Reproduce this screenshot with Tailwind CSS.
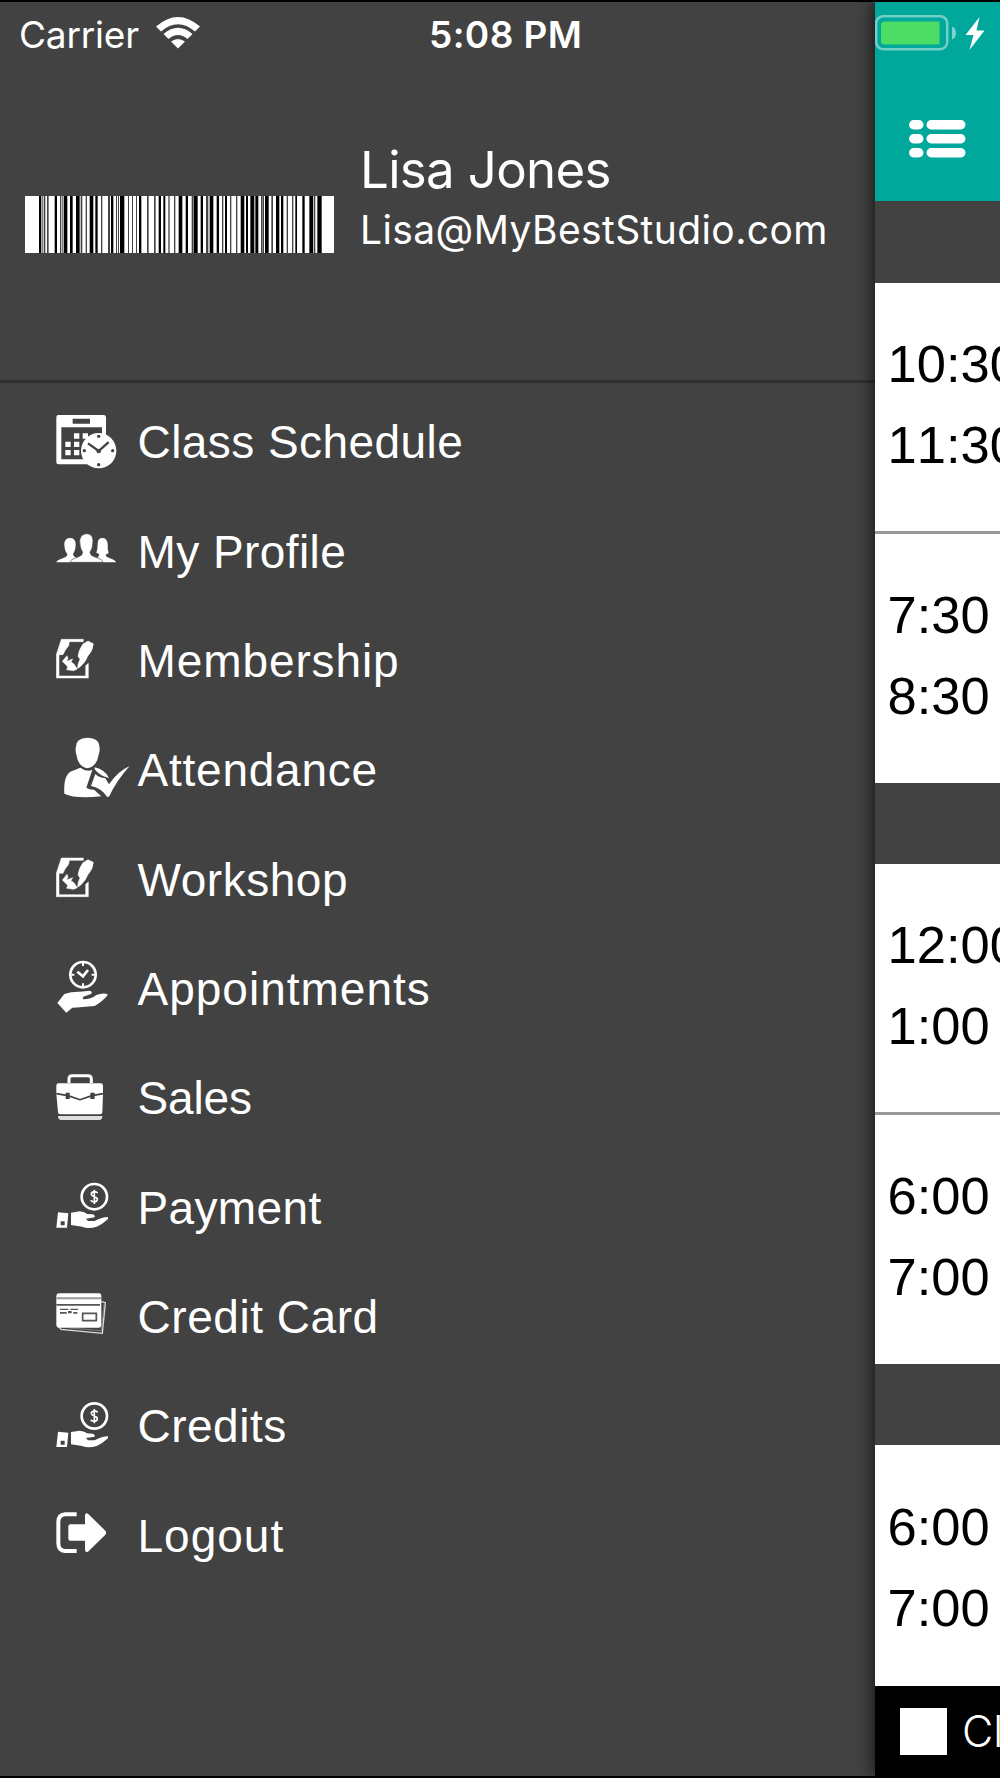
<!DOCTYPE html>
<html lang="en">
<head>
<meta charset="utf-8">
<title>Menu</title>
<script src="https://cdn.jsdelivr.net/npm/@tailwindcss/browser@4"></script>
</head>
<body class="bg-black">
<div class="relative flex h-[1778px] w-[1000px] overflow-hidden bg-[#424242] border-y-2 border-black font-['Inter',sans-serif] text-white">
  <!-- Side drawer -->
  <aside class="flex w-[875px] shrink-0 flex-col bg-[#424242]">
    <div class="flex h-[66px] items-center">
      <span class="-mt-[2px] ml-[19px] w-[137px] text-[37px] leading-none tracking-[-0.2px] whitespace-nowrap">Carrier</span>
      <svg class="h-[32px] w-[44px] -mt-[5px]" viewBox="0 0 44 32" fill="white"><path d="M0 9.5Q22-9.500 44 9.500L39 14.500Q22 0 5 14.500ZM7.500 17Q22 4.500 36.500 17L31.500 22Q22 14 12.500 22ZM15 24.500Q22 19.500 29 24.500L22 31.500Z"/></svg>
      <span class="-mt-[2px] ml-[229px] text-[37px] leading-none font-semibold tracking-[0.4px] whitespace-nowrap">5:08 PM</span>
    </div>
    <div class="flex h-[315px] shrink-0 items-start border-b-[3px] border-[#303030] pl-[25px]">
      <svg id="barcode" class="mt-[128px] h-[57px] w-[309px]" viewBox="45 0 927 171" preserveAspectRatio="none"><path fill="white" d="M45 0H972V171H45Z"/></svg>
      <div class="ml-[26px] flex flex-col pt-[71px] whitespace-nowrap">
        <span class="self-start text-[51px] leading-[61px] tracking-[-0.67px]">Lisa Jones</span>
        <span class="self-start text-[39px] leading-[60px] tracking-[0.4px]">Lisa@MyBestStudio.com</span>
      </div>
    </div>
    <nav class="mt-[4.500px] flex flex-col font-['Liberation_Sans',sans-serif] text-[46px] leading-none">
      <a class="flex h-[109.37px] items-center pl-[56px]">
        <svg class="h-full w-[83px]" viewBox="48 -38 249 328" fill="white"><path fill-rule="evenodd" d="M55 43H191Q198 43 198 50V184Q198 191 191 191H55Q49 191 49 184V50Q49 43 55 43ZM98 54V69H150V54ZM64 80V176H186V80Z"/><path d="M102 98h16v16h-16zM128 98h16v16h-16zM76 123h16v16H76zM102 123h16v16h-16zM76 148h16v16H76zM102 148h16v16h-16z"/><circle cx="176" cy="150" r="53"/><path d="M144 128L176 151L206 124" fill="none" stroke="#424242" stroke-width="7"/><g fill="#424242"><circle cx="176" cy="151" r="7"/><circle cx="176" cy="107" r="5"/><circle cx="176" cy="192" r="5"/><circle cx="133" cy="150" r="5"/><circle cx="218" cy="150" r="5"/></g></svg>
        <span class="-ml-[1.500px] tracking-[0.43px]">Class Schedule</span></a>
      <a class="flex h-[109.37px] items-center pl-[56px]">
        <svg class="h-full w-[83px]" viewBox="48 290 249 328" fill="white"><path d="M49 486Q50 480 68 474Q82 470 82 461Q72 450 73 428Q76 413 90 413Q106 413 107 430Q107 450 99 461Q99 468 108 472L92 486ZM228 486Q227 480 210 474Q197 469 197 463L206 458Q202 445 203 430Q201 413 187 413Q173 413 173 430Q173 448 169 457L178 462Q178 468 172 472L188 486Z"/><path d="M90 486Q91 477 112 471Q128 466 128 456Q119 444 119 420Q122 400 140 400Q158 400 159 420Q159 444 150 456Q150 466 167 471Q188 477 189 486Z" stroke="#424242" stroke-width="2"/></svg>
        <span class="-ml-[1.500px] tracking-[0.43px]">My Profile</span></a>
      <a class="flex h-[109.37px] items-center pl-[56px]">
        <svg class="h-full w-[83px]" viewBox="48 -42 249 328" fill="white"><path id="note" stroke="white" stroke-width="1.500" d="M64 58H130V65H88L86 77Q75 89 69 104H57V168H137V137L145 130V174H49V104ZM129 72L144 63L160 71Q159 92 143 109Q137 126 120 141L113 145Q112 134 120 118L114 109Q116 90 129 72ZM81 107L84 115L80 124L98 117L93 126L102 132L112 147L101 152L80 149L83 140L67 124Z"/></svg>
        <span class="-ml-[1.500px] tracking-[0.9px]">Membership</span></a>
      <a class="flex h-[109.37px] items-center pl-[56px]">
        <svg class="h-full w-[83px]" viewBox="48 286 249 328" fill="white"><path d="M142 351Q178 352 178 378Q181 388 176 402Q170 439 142 443Q115 439 109 402Q105 388 108 378Q108 352 142 351ZM73 519Q69 455 103 449L121 441Q141 456 157 447L139 501Q149 508 162 507L184 527Q105 535 73 519ZM164 440Q195 447 207 472Q180 467 164 446ZM166 460Q178 471 196 473L207 491Q233 452 269 436Q230 479 207 528H201Q182 501 153 496Z"/></svg>
        <span class="-ml-[1.500px] tracking-[0.77px]">Attendance</span></a>
      <a class="flex h-[109.37px] items-center pl-[56px]">
        <svg class="h-full w-[83px]" viewBox="48 -41 249 328" fill="white"><use href="#note"/></svg>
        <span class="-ml-[1.500px] tracking-[0.55px]">Workshop</span></a>
      <a class="flex h-[109.37px] items-center pl-[56px]">
        <svg class="h-full w-[83px]" viewBox="48 283 249 328" fill="white"><g fill="none" stroke="white"><circle cx="129" cy="405" r="38" stroke-width="8"/><path d="M112 396L129 410L144 391" stroke-width="8"/><path d="M129 370v9M129 431v9M94 405h9M155 405h9" stroke-width="6"/></g><path d="M52 490L73 463Q96 455 120 456L150 453Q159 457 153 463L130 471L128 479Q154 479 169 466Q192 457 204 465Q190 483 164 499Q125 503 97 504L79 519Z"/></svg>
        <span class="-ml-[1.500px] tracking-[1px]">Appointments</span></a>
      <a class="flex h-[109.37px] items-center pl-[56px]">
        <svg class="h-full w-[83px]" viewBox="48 -49 249 328" fill="white"><path d="M87 68V55Q87 46 96 46H144Q154 46 154 55V68" fill="none" stroke="white" stroke-width="9"/><path d="M49 76Q49 69 56 69H182Q189 69 189 76V100L187 156Q187 162 180 162H61Q54 162 54 156L49 100Z"/><path d="M49 100L84 106L120 118L156 106L189 100" fill="none" stroke="#424242" stroke-width="5"/><path d="M77 97h12v19H77zM151 97h13v19h-13z" fill="#424242"/><path d="M54 167H187Q187 179 178 179H64Q54 179 54 167Z" fill="#dedede"/></svg>
        <span class="-ml-[1.500px] tracking-[-0.15px]">Sales</span></a>
      <a class="flex h-[109.37px] items-center pl-[56px]">
        <svg class="h-full w-[83px]" viewBox="48 279 249 328" fill="white"><g id="pay"><circle cx="163" cy="410" r="38" fill="none" stroke="white" stroke-width="8"/><path d="M173 399Q168 394 162 395Q153 397 154 403Q155 408 163 410Q173 413 172 419Q171 425 163 426Q156 426 152 421M163 389V432" fill="none" stroke="white" stroke-width="5"/><path fill-rule="evenodd" d="M54 457L85 460L81 503H49ZM62 484V496H74V484Z"/><path d="M93 458L119 454Q135 456 141 462L158 463Q166 466 164 472L138 476L144 483H164Q186 471 204 471V477Q187 493 170 500Q145 508 126 500L93 495Z"/></g></svg>
        <span class="-ml-[1.500px] tracking-[0.37px]">Payment</span></a>
      <a class="flex h-[109.37px] items-center pl-[56px]">
        <svg class="h-full w-[83px]" viewBox="48 -53 249 328" fill="white"><path d="M184 66L196 69L187 161L63 149L56 140" fill="none" stroke="#ddd" stroke-width="4"/><path d="M192 74L184 153L90 145" fill="none" stroke="#999" stroke-width="2"/><path d="M56 41H178Q184 42 184 49V138Q183 144 176 144H57Q49 143 49 135V49Q49 42 56 41Z"/><path d="M49 53H184V59H49Z" fill="#999"/><path d="M49 73H180V78H49ZM60 87H85V91H60ZM91 87H114V91H91ZM60 97H80V102H60ZM84 94H95V101H84ZM100 97H112V102H100Z" fill="#555"/><path d="M128 101H169V123H128Z" fill="none" stroke="#555" stroke-width="5"/></svg>
        <span class="-ml-[1.500px] tracking-[0.55px]">Credit Card</span></a>
      <a class="flex h-[109.37px] items-center pl-[56px]">
        <svg class="h-full w-[83px]" viewBox="48 278 249 328" fill="white"><use href="#pay"/></svg>
        <span class="-ml-[1.500px] tracking-[0.5px]">Credits</span></a>
      <a class="flex h-[109.37px] items-center pl-[56px]">
        <svg class="h-full w-[83px]" viewBox="48 603 249 328" fill="white"><path d="M110 703H75Q55 705 55 726V790Q55 812 75 813H110" fill="none" stroke="white" stroke-width="12"/><path d="M91 733H135V706Q136 697 144 701L196 752Q201 758 196 764L144 815Q136 819 135 810V782H91Q85 782 85 776V739Q85 733 91 733Z"/></svg>
        <span class="-ml-[1.500px] tracking-[1px]">Logout</span></a>
    </nav>
  </aside>

  <!-- Schedule screen, pushed aside by the drawer -->
  <main class="flex w-[640px] shrink-0 flex-col bg-[#424242] shadow-[0_0_17px_rgba(0,0,0,0.8)] font-['Liberation_Sans',sans-serif] text-[52.5px] leading-[81px] text-black [font-kerning:none]">
    <header class="h-[199px] shrink-0 bg-[#00a79b]">
      <div class="flex h-[66px] items-center">
        <svg class="h-[36px] w-[112px] -mt-[4px]" viewBox="0 0 112 36"><rect x="1.200" y="1.200" width="71" height="33" rx="7" fill="none" stroke="white" stroke-opacity=".45" stroke-width="2.500"/><path fill="#4cdb64" d="M9 6.500H64.500V29.500H9Q6 29.500 6 26V10Q6 6.500 9 6.500Z"/><path fill="white" fill-opacity=".5" d="M77 11.500Q81 13 81 18T77 24.500Z"/><path fill="white" d="M104.500 2L90.500 20H98.500L94.500 35L109.500 15.500H101.500Z"/></svg>
      </div>
      <svg class="ml-[34px] mt-[52px] h-[38px] w-[57px]" viewBox="0 0 57 38" fill="white"><rect y="0" width="14.500" height="9.500" rx="4.700"/><rect x="17.500" y="0" width="39" height="9.500" rx="4.700"/><rect y="14" width="14.500" height="9.500" rx="4.700"/><rect x="17.500" y="14" width="39" height="9.500" rx="4.700"/><rect y="28" width="14.500" height="9.500" rx="4.700"/><rect x="17.500" y="28" width="39" height="9.500" rx="4.700"/></svg>
    </header>
    <section class="mt-[81.500px] h-[500px] shrink-0 bg-white">
      <div class="h-[251px] border-b-[3px] border-[#999] pt-[40.500px] pl-[12.500px]"><p>10:30</p><p>11:30</p></div>
      <div class="pt-[40px] pl-[12.500px]"><p>7:30</p><p>8:30</p></div>
    </section>
    <section class="mt-[81px] h-[500px] shrink-0 bg-white">
      <div class="h-[251px] border-b-[3px] border-[#999] pt-[40.500px] pl-[12.500px]"><p>12:00</p><p>1:00</p></div>
      <div class="pt-[40px] pl-[12.500px]"><p>6:00</p><p>7:00</p></div>
    </section>
    <section class="mt-[81px] h-[241.500px] shrink-0 bg-white">
      <div class="pt-[41px] pl-[12.500px]"><p>6:00</p><p>7:00</p></div>
    </section>
    <footer class="flex grow items-center bg-black pl-[25px] font-['Inter',sans-serif] text-[43px] leading-none text-white">
      <span class="size-[47px] bg-white"></span><span class="ml-[15px] font-light">Class</span>
    </footer>
  </main>
</div>
<script>
// Barcode stripes: [x, width, light]
const bars=[[87,7],[97,3,1],[102,4,1],[111,5,1],[134,7],[150,3,1],[155,3,1],[161,11],[180,8],[198,11],[212,5,1],[227,4,1],[239,11],[256,7],[273,4,1],[294,6,1],[303,7],[318,3,1],[324,3,1],[330,13],[354,3,1],[366,3,1],[378,3,1],[387,7],[411,5,1],[432,5,1],[446,7],[460,6],[475,4,1],[492,4,1],[506,11],[527,7],[545,6,1],[552,11],[572,7],[588,7,1],[599,11],[620,7],[636,4,1],[645,6],[660,4,1],[678,4,1],[692,11],[708,6],[721,12],[736,9],[753,5,1],[759,3,1],[765,11],[784,5,1],[798,10],[813,7],[830,4,1],[846,4,1],[856,5],[877,7],[898,11],[911,5,1],[922,13]];
document.getElementById('barcode').innerHTML+=bars.map(([x,w,g])=>`<path fill="${g?'#444':'#000'}" d="M${x} 0h${w}v171h-${w}z"/>`).join('');
</script>
</body>
</html>
